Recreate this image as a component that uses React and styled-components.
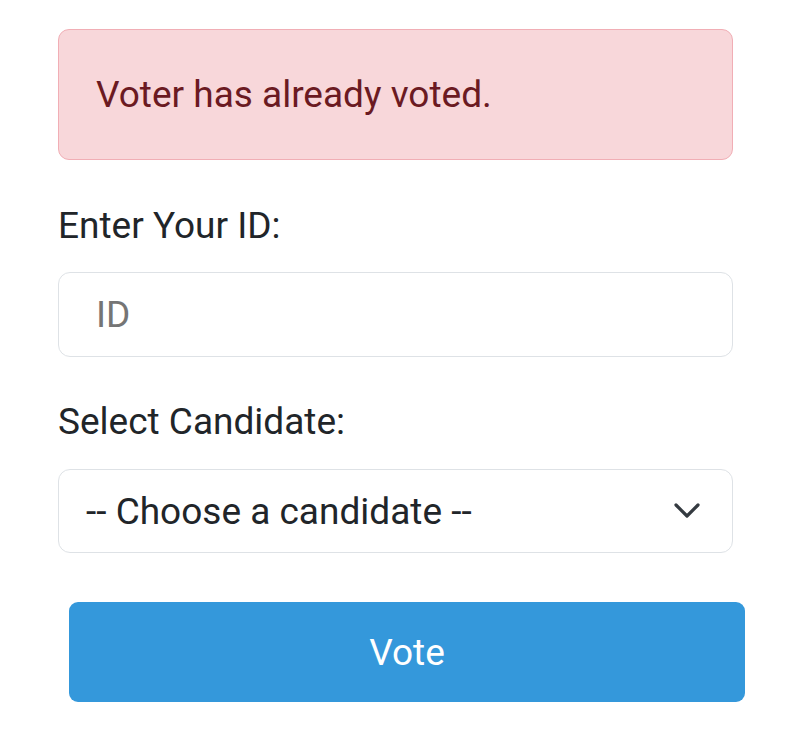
import React, { useState } from 'react'
import styled, { createGlobalStyle } from 'styled-components'

const GlobalStyle = createGlobalStyle`
    body {
        margin: 0;
        background: #ffffff;
        font-family: Roboto, "Liberation Sans", Arial, sans-serif;
    }
`

const Page = styled.div`
    width: 675px;
    padding: 29px 0 0 58px;
    display: flex;
    flex-direction: column;
`

const Alert = styled.div`
    box-sizing: border-box;
    height: 131px;
    padding: 0 37px;
    display: flex;
    align-items: center;
    background-color: #f8d7da;
    border: 1.5px solid #f1aeb5;
    border-radius: 11px;
    color: #6b1a22;
    font-size: 37px;
`

const Label = styled.label`
    display: block;
    margin-top: ${props => props.marginTop || "44px"};
    font-size: 37px;
    line-height: 44px;
    color: #212529;
`

const Field = styled.input`
    box-sizing: border-box;
    width: 100%;
    height: 85px;
    margin-top: 24px;
    padding: 0 37px;
    border: 1.5px solid #dee2e6;
    border-radius: 12px;
    font-family: inherit;
    font-size: 37px;
    color: #212529;
    outline: none;

    ::placeholder {
        color: #6c757d;
    }
`

const SelectWrap = styled.div`
    position: relative;
    margin-top: 25px;
`

const Select = styled.select`
    box-sizing: border-box;
    width: 100%;
    height: 84px;
    padding: 0 80px 0 27px;
    border: 1.5px solid #dee2e6;
    border-radius: 12px;
    background: #ffffff;
    font-family: inherit;
    font-size: 37px;
    color: #212529;
    appearance: none;
    outline: none;
`

const Chevron = styled.svg`
    position: absolute;
    right: 32px;
    top: 33px;
    pointer-events: none;
`

const VoteButton = styled.button`
    box-sizing: border-box;
    width: 676px;
    height: 100px;
    margin: 49px 0 0 11px;
    border: none;
    border-radius: 9px;
    background-color: #3498db;
    color: #ffffff;
    font-family: inherit;
    font-size: 37px;
    cursor: pointer;
`

const App = () => {
    const [voterId, setVoterId] = useState('')
    const [candidate, setCandidate] = useState('')

    return (
        <Page>
            <GlobalStyle />
            <Alert>Voter has already voted.</Alert>
            <Label htmlFor="voter-id">Enter Your ID:</Label>
            <Field id="voter-id" type="text" placeholder="ID" value={voterId}
                   onChange={e => setVoterId(e.target.value)} />
            <Label htmlFor="candidate" marginTop="43px">Select Candidate:</Label>
            <SelectWrap>
                <Select id="candidate" value={candidate} onChange={e => setCandidate(e.target.value)}>
                    <option value="">-- Choose a candidate --</option>
                    <option value="1">Candidate 1</option>
                    <option value="2">Candidate 2</option>
                </Select>
                <Chevron width="28" height="17" viewBox="0 0 28 17">
                    <path d="M3 3 L14 14 L25 3" fill="none" stroke="#343a40" strokeWidth="3.2"
                          strokeLinecap="round" strokeLinejoin="round" />
                </Chevron>
            </SelectWrap>
            <VoteButton>Vote</VoteButton>
        </Page>
    )
}

export default App
